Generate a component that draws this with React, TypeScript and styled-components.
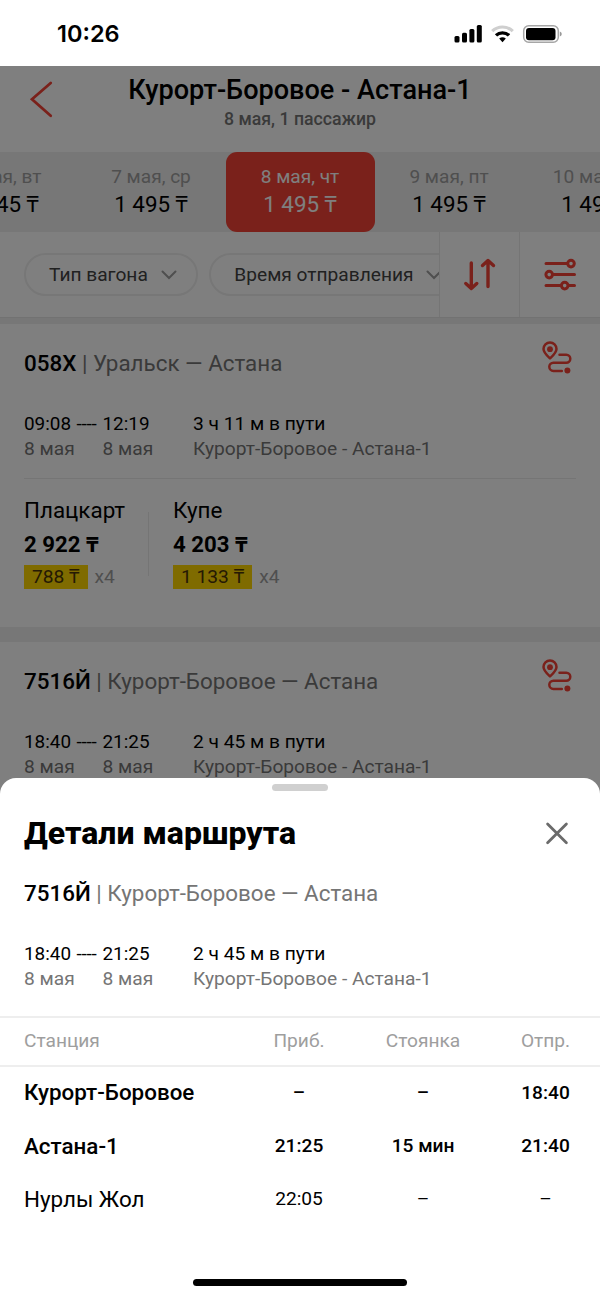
import React from "react";
import styled, { createGlobalStyle } from "styled-components";

const GlobalStyle = createGlobalStyle`
  * { box-sizing: border-box; }
  body { margin: 0; background: #fff; }
`;

const RED = "#f44336";

const Screen = styled.div`
  position: relative;
  width: 600px;
  height: 1297px;
  overflow: hidden;
  background: #fff;
  color: #000;
  font-family: Roboto, "Noto Sans", sans-serif;
  white-space: nowrap;
`;

const StatusBar = styled.div`
  display: flex;
  align-items: center;
  justify-content: space-between;
  height: 66px;
  padding: 2px 38px 0 57px;
`;
const Clock = styled.div`
  font: 600 23.5px/30px Inter, sans-serif;
`;

const Page = styled.div`
  position: relative;
  height: 1231px;
  overflow: hidden;
`;
const Shade = styled.div`
  position: absolute;
  inset: 0;
  background: rgba(0, 0, 0, 0.5);
`;

const Header = styled.header`
  display: grid;
  grid-template-columns: 60px 1fr 60px;
  height: 86px;
`;
const BackButton = styled.div`
  padding: 14px 0 0 28px;
`;
const Heading = styled.div`
  padding-top: 8px;
  text-align: center;
`;
const Title = styled.h1`
  margin: 0;
  font-size: 27.1px;
  line-height: 32px;
  font-weight: 500;
`;
const Subtitle = styled.div`
  font-size: 17.7px;
  line-height: 26px;
  font-weight: 500;
  color: #757575;
`;

const DateStrip = styled.div`
  display: flex;
  justify-content: center;
  height: 80px;
  background: #eee;
`;
const DateCell = styled.div<{ $active?: boolean }>`
  flex: 0 0 149px;
  padding-top: 10px;
  border-radius: 11px;
  text-align: center;
  background: ${(p) => (p.$active ? RED : "transparent")};
  color: ${(p) => (p.$active ? "#fff" : "#000")};
`;
const DateName = styled.div<{ $active?: boolean }>`
  font-size: 19.1px;
  line-height: 29px;
  color: ${(p) => (p.$active ? "#fff" : "#9e9e9e")};
`;
const DatePrice = styled.div`
  font-size: 22.4px;
  line-height: 26px;
`;

const FilterRow = styled.div`
  display: flex;
  height: 86px;
  border-bottom: 1px solid #e4e4e4;
`;
const Pills = styled.div`
  display: flex;
  align-items: center;
  gap: 11px;
  width: 439px;
  padding-left: 24px;
  overflow: hidden;
`;
const Pill = styled.div`
  display: flex;
  flex: none;
  align-items: center;
  gap: 13px;
  height: 43px;
  padding: 0 19.5px 0 23px;
  border: 2px solid #eee;
  border-radius: 22px;
  font-size: 19.15px;
  color: #424242;
`;
const ToolCell = styled.div`
  display: flex;
  align-items: center;
  justify-content: center;
  width: 80px;
  border-left: 1px solid #ebebeb;
`;

const List = styled.main`
  display: flex;
  flex-direction: column;
  gap: 15px;
  padding-top: 6px;
  background: #eee;
`;
const Card = styled.section`
  height: 303px;
  padding: 25px 24px 0;
  background: #fff;
`;
const TrainLine = styled.div`
  display: flex;
  justify-content: space-between;
  height: 28px;
  font-size: 22.4px;
  line-height: 28px;
  color: #757575;
`;
const TrainNumber = styled.span`
  font-weight: 500;
  color: #000;
`;
const RouteButton = styled.div`
  width: 36px;
  height: 34px;
  margin-top: -9px;
`;

const Schedule = styled.div`
  display: grid;
  grid-template-columns: 52.5px 26px 90.5px 1fr;
  grid-template-rows: 25px 25px;
  margin-top: 34px;
  font-size: 19.2px;
  line-height: 25px;
`;
const Time = styled.span`
  font-size: 18.9px;
`;
const Dashes = styled.span`
  font-size: 18.9px;
  letter-spacing: -0.2px;
`;
const Muted = styled.span<{ $wide?: boolean }>`
  grid-column: span ${(p) => (p.$wide ? 2 : 1)};
  color: #757575;
`;

const Fares = styled.div`
  display: flex;
  margin-top: 17px;
  padding-top: 17px;
  border-top: 1px solid #ebebeb;
`;
const Fare = styled.div<{ $width: number }>`
  width: ${(p) => p.$width}px;
`;
const FareDivider = styled.div`
  width: 1px;
  height: 64px;
  margin: 16px 24px 0 0;
  background: #ebebeb;
`;
const FareName = styled.div`
  font-size: 22.4px;
  line-height: 28px;
`;
const FarePrice = styled.div`
  margin-top: 6px;
  font-size: 22.2px;
  line-height: 28px;
  font-weight: 700;
`;
const BonusLine = styled.div`
  display: flex;
  gap: 7px;
  margin-top: 7px;
  font-size: 19.2px;
  line-height: 24px;
  color: #9e9e9e;
`;
const Bonus = styled.span`
  padding: 0 8px;
  background: #ffd600;
  color: #4a3508;
`;

const Sheet = styled.section`
  position: absolute;
  inset: 778px 0 0;
  display: flex;
  flex-direction: column;
  border-radius: 16px 16px 0 0;
  background: #fff;
`;
const Handle = styled.div`
  width: 56px;
  height: 7px;
  margin: 6px auto 0;
  border-radius: 4px;
  background: #d0d0d0;
`;
const SheetHead = styled.div`
  display: flex;
  align-items: center;
  justify-content: space-between;
  height: 40px;
  margin-top: 22px;
  padding: 0 30px 0 24px;
`;
const SheetTitle = styled.h2`
  margin: 0;
  font-size: 32px;
  line-height: 40px;
  font-weight: 800;
`;
const SheetTrain = styled.div`
  padding: 26px 24px 25px;
`;
const TableRow = styled.div<{ $bold?: boolean }>`
  display: grid;
  grid-template-columns: 1fr 105px 143px 102px;
  align-items: center;
  height: 53.3px;
  padding: 0 3.5px 0 24px;
  font-size: 19.15px;
  font-weight: ${(p) => (p.$bold ? 500 : 400)};
`;
const TableHead = styled(TableRow)`
  height: 51px;
  padding-bottom: 1.5px;
  border: solid #eee;
  border-width: 2px 0;
  color: #9e9e9e;
`;
const TableBody = styled.div`
  margin-top: -1.4px;
`;
const Station = styled.span`
  font-size: 22.4px;
`;
const Value = styled.span`
  text-align: center;
`;
const HomeIndicator = styled.div`
  width: 214px;
  height: 7px;
  margin: auto auto 11px;
  border-radius: 4px;
  background: #000;
`;

const StatusIcons = () => (
  <svg width="108" height="20" viewBox="0 0 108 20">
    <rect x="0.5" y="12" width="5" height="6.5" rx="1.5" />
    <rect x="8" y="8.7" width="5" height="9.8" rx="1.5" />
    <rect x="15.4" y="5" width="5" height="13.5" rx="1.5" />
    <rect x="22.8" y="1" width="5" height="17.5" rx="1.5" />
    <g fill="none">
      <path d="M38.2 7.1a15 15 0 0 1 20.6 0" stroke="#cfcfcf" strokeWidth="3.2" />
      <path d="M42 11.4a9.4 9.4 0 0 1 13 0" stroke="#000" strokeWidth="3.3" />
    </g>
    <path d="M45.2 14.6a5 5 0 0 1 6.6 0L48.5 18.2z" />
    <rect x="69.7" y="1.7" width="34.6" height="16.6" rx="5" fill="none" stroke="#a6a6a6" strokeWidth="1.5" />
    <rect x="72" y="4" width="29.5" height="12.2" rx="3" />
    <path d="M105.8 7.6q2 .7 2 2.4t-2 2.4z" fill="#999" />
  </svg>
);

const BackIcon = () => (
  <svg width="28" height="40" viewBox="0 0 28 40" fill="none" stroke={RED} strokeWidth="2.8" strokeLinecap="round">
    <path d="M22.7 3L4 19.2L22.7 35.8" />
  </svg>
);

const ChevronDown = () => (
  <svg width="16" height="10" viewBox="0 0 16 10" fill="none" stroke="#9e9e9e" strokeWidth="2" strokeLinecap="round">
    <path d="M1.5 1.5L8 8L14.5 1.5" />
  </svg>
);

const SortIcon = () => (
  <svg width="34" height="34" viewBox="0 0 34 34" fill="none" stroke={RED} strokeWidth="3.4" strokeLinecap="round" strokeLinejoin="round">
    <path d="M8.3 5V30.5M2.8 25.5L8.3 30.5L13.8 25.5" />
    <path d="M25 28.5V2.5M19.5 7.5L25 2.5L30.5 7.5" />
  </svg>
);

const SlidersIcon = () => (
  <svg width="34" height="34" viewBox="0 0 34 34" fill="none" stroke={RED} strokeWidth="3" strokeLinecap="round">
    <path d="M3 5.6H24.6M10.6 16.6H31.5M3 27.6H17.7M26 27.6H31.5" />
    <circle cx="28" cy="5.6" r="3.3" />
    <circle cx="6.2" cy="16.6" r="3.3" />
    <circle cx="21.7" cy="27.6" r="3.3" />
  </svg>
);

const RouteIcon = () => (
  <svg width="36" height="36" viewBox="0 0 36 36" fill="none" stroke={RED} strokeWidth="2.5" strokeLinecap="round" strokeLinejoin="round">
    <path d="M10 18.4C6.6 15.2 3.5 12.4 3.5 8.9a6.5 6.5 0 0 1 13 0C16.5 12.4 13.4 15.2 10 18.4z" />
    <circle cx="10" cy="9.2" r="2.9" fill={RED} stroke="none" />
    <path d="M19.5 14.7H26.3a4 4 0 0 1 0 8H13.4a4 4 0 0 0 0 8.2H21.8" />
    <circle cx="27.4" cy="30.5" r="3" fill={RED} stroke="none" />
  </svg>
);

const CloseIcon = () => (
  <svg width="26" height="26" viewBox="0 0 26 26" fill="none" stroke="#6b6b6b" strokeWidth="2.8" strokeLinecap="round">
    <path d="M3.6 3.9L22.4 22.7M22.4 3.9L3.6 22.7" />
  </svg>
);

const Trip = ({ from, to, duration }: { from: string; to: string; duration: string }) => (
  <Schedule>
    <Time>{from}</Time>
    <Dashes>----</Dashes>
    <Time>{to}</Time>
    <span>{duration}</span>
    <Muted $wide>8 мая</Muted>
    <Muted>8 мая</Muted>
    <Muted>Курорт-Боровое - Астана-1</Muted>
  </Schedule>
);

const dates = [
  ["6 мая, вт", "1 545 ₸"],
  ["7 мая, ср", "1 495 ₸"],
  ["8 мая, чт", "1 495 ₸"],
  ["9 мая, пт", "1 495 ₸"],
  ["10 мая, сб", "1 495 ₸"],
];

const stops = [
  { station: "Курорт-Боровое", arrival: "–", stay: "–", departure: "18:40", bold: true },
  { station: "Астана-1", arrival: "21:25", stay: "15 мин", departure: "21:40", bold: true },
  { station: "Нурлы Жол", arrival: "22:05", stay: "–", departure: "–", bold: false },
];

export default function App() {
  return (
    <Screen>
      <GlobalStyle />
      <StatusBar>
        <Clock>10:26</Clock>
        <StatusIcons />
      </StatusBar>
      <Page>
        <Header>
          <BackButton><BackIcon /></BackButton>
          <Heading>
            <Title>Курорт-Боровое - Астана-1</Title>
            <Subtitle>8 мая, 1 пассажир</Subtitle>
          </Heading>
        </Header>
        <DateStrip>
          {dates.map(([name, price], i) => (
            <DateCell key={name} $active={i === 2}>
              <DateName $active={i === 2}>{name}</DateName>
              <DatePrice>{price}</DatePrice>
            </DateCell>
          ))}
        </DateStrip>
        <FilterRow>
          <Pills>
            <Pill>Тип вагона<ChevronDown /></Pill>
            <Pill>Время отправления<ChevronDown /></Pill>
          </Pills>
          <ToolCell><SortIcon /></ToolCell>
          <ToolCell><SlidersIcon /></ToolCell>
        </FilterRow>
        <List>
          <Card>
            <TrainLine>
              <span><TrainNumber>058Х</TrainNumber> | Уральск — Астана</span>
              <RouteButton><RouteIcon /></RouteButton>
            </TrainLine>
            <Trip from="09:08" to="12:19" duration="3 ч 11 м в пути" />
            <Fares>
              <Fare $width={124}>
                <FareName>Плацкарт</FareName>
                <FarePrice>2 922 ₸</FarePrice>
                <BonusLine><Bonus>788 ₸</Bonus>x4</BonusLine>
              </Fare>
              <FareDivider />
              <Fare $width={124}>
                <FareName>Купе</FareName>
                <FarePrice>4 203 ₸</FarePrice>
                <BonusLine><Bonus>1 133 ₸</Bonus>x4</BonusLine>
              </Fare>
            </Fares>
          </Card>
          <Card>
            <TrainLine>
              <span><TrainNumber>7516Й</TrainNumber> | Курорт-Боровое — Астана</span>
              <RouteButton><RouteIcon /></RouteButton>
            </TrainLine>
            <Trip from="18:40" to="21:25" duration="2 ч 45 м в пути" />
          </Card>
        </List>
        <Shade />
      </Page>
      <Sheet>
        <Handle />
        <SheetHead>
          <SheetTitle>Детали маршрута</SheetTitle>
          <CloseIcon />
        </SheetHead>
        <SheetTrain>
          <TrainLine>
            <span><TrainNumber>7516Й</TrainNumber> | Курорт-Боровое — Астана</span>
          </TrainLine>
          <Trip from="18:40" to="21:25" duration="2 ч 45 м в пути" />
        </SheetTrain>
        <TableHead>
          <span>Станция</span>
          <Value>Приб.</Value>
          <Value>Стоянка</Value>
          <Value>Отпр.</Value>
        </TableHead>
        <TableBody>
          {stops.map((s) => (
            <TableRow key={s.station} $bold={s.bold}>
              <Station>{s.station}</Station>
              <Value>{s.arrival}</Value>
              <Value>{s.stay}</Value>
              <Value>{s.departure}</Value>
            </TableRow>
          ))}
        </TableBody>
        <HomeIndicator />
      </Sheet>
    </Screen>
  );
}
